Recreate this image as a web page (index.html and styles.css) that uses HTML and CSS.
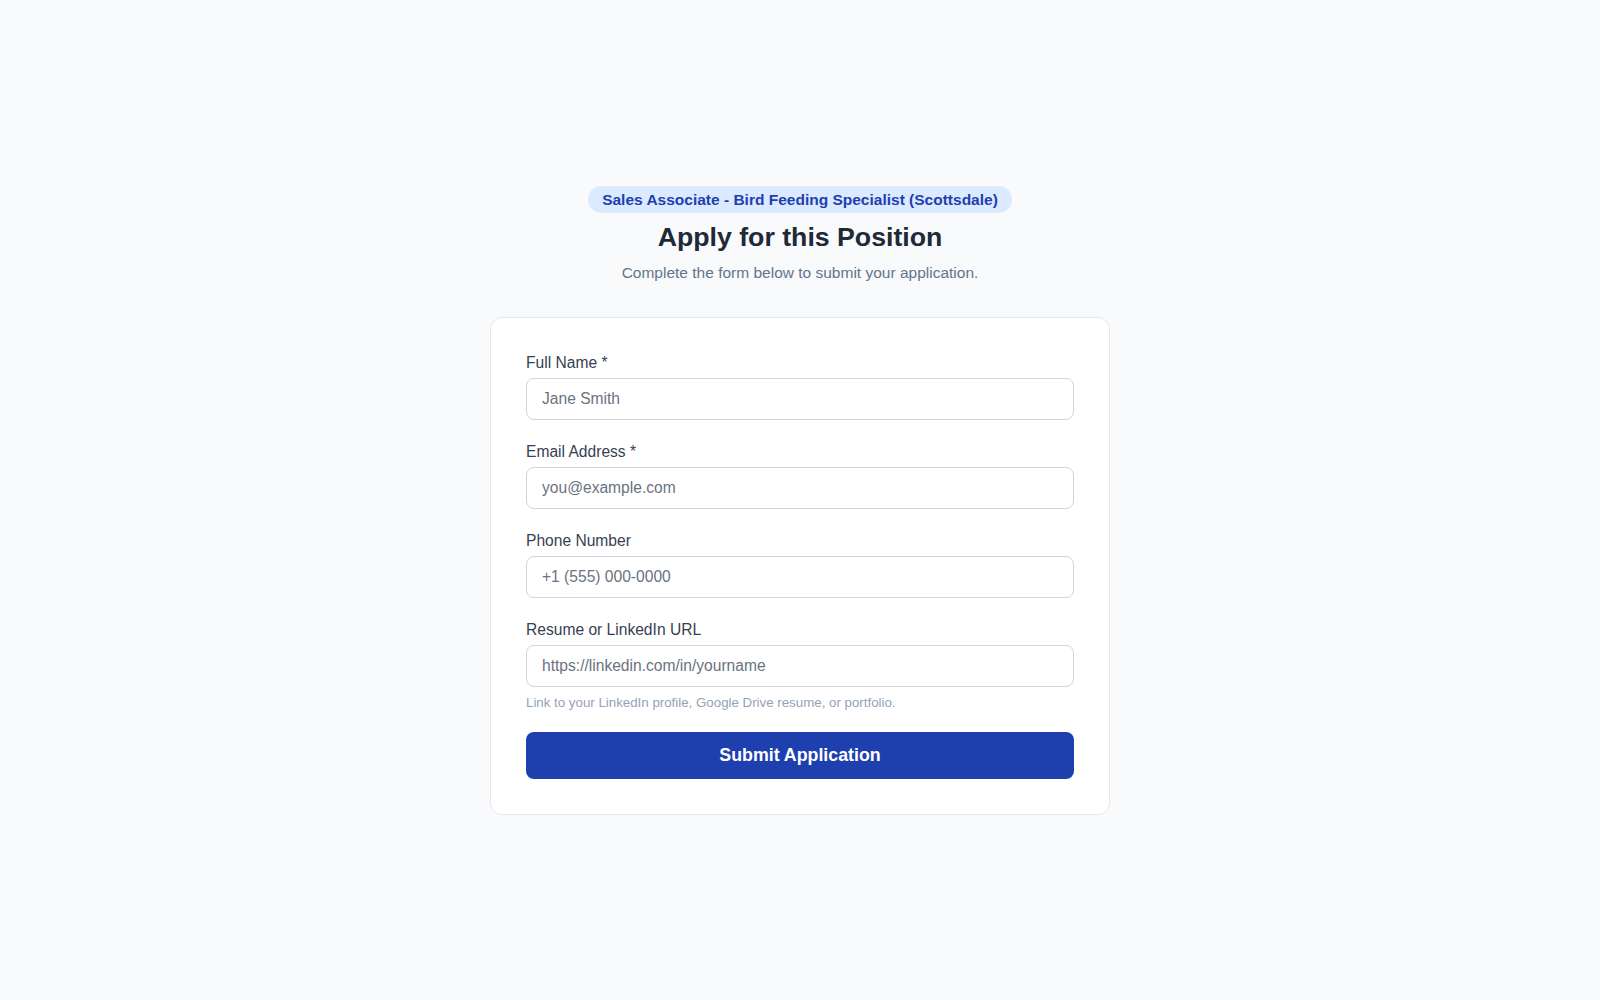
FILE: index.html
```html
<!DOCTYPE html>
<html lang="en">
<head>
<meta charset="utf-8">
<title>Apply for this Position</title>
<link rel="stylesheet" href="styles.css">
</head>
<body>
<main class="page">
  <header class="intro">
    <span class="badge">Sales Associate - Bird Feeding Specialist (Scottsdale)</span>
    <h1 class="title">Apply for this Position</h1>
    <p class="subtitle">Complete the form below to submit your application.</p>
  </header>
  <form class="card">
    <div class="field">
      <label class="label" for="name">Full Name *</label>
      <input class="input" id="name" type="text" placeholder="Jane Smith">
    </div>
    <div class="field">
      <label class="label" for="email">Email Address *</label>
      <input class="input" id="email" type="email" placeholder="you@example.com">
    </div>
    <div class="field">
      <label class="label" for="phone">Phone Number</label>
      <input class="input" id="phone" type="tel" placeholder="+1 (555) 000-0000">
    </div>
    <div class="field field-last">
      <label class="label" for="url">Resume or LinkedIn URL</label>
      <input class="input" id="url" type="url" placeholder="https://linkedin.com/in/yourname">
      <p class="hint">Link to your LinkedIn profile, Google Drive resume, or portfolio.</p>
    </div>
    <button class="submit" type="button">Submit Application</button>
  </form>
</main>
</body>
</html>
```

FILE: styles.css
```css
* { box-sizing: border-box; }
html, body { margin: 0; padding: 0; }
body {
  background: #f8fafc;
  font-family: "Liberation Sans", Arial, sans-serif;
  color: #1f2937;
}
.page {
  min-height: 1000px;
  display: flex;
  flex-direction: column;
  align-items: center;
  justify-content: center;
}
.intro {
  display: flex;
  flex-direction: column;
  align-items: center;
  text-align: center;
}
.badge {
  display: inline-block;
  background: #dbeafe;
  color: #1e40af;
  font-weight: 700;
  font-size: 15.5px;
  line-height: 27px;
  height: 27px;
  padding: 0 14px;
  border-radius: 14px;
}
.title {
  margin: 7px 0 0;
  font-size: 26.7px;
  line-height: 34px;
  font-weight: 700;
  color: #1f2937;
}
.subtitle {
  margin: 7px 0 0;
  font-size: 15.5px;
  line-height: 24px;
  color: #64748b;
}
.card {
  margin-top: 32px;
  width: 620px;
  background: #ffffff;
  border: 1px solid #e5e7eb;
  border-radius: 12px;
  padding: 35px;
}
.field { margin-bottom: 22px; }
.field-last { margin-bottom: 20px; }
.label {
  display: block;
  font-size: 15.6px;
  line-height: 20px;
  color: #374151;
  margin-bottom: 5px;
}
.input {
  display: block;
  width: 100%;
  height: 42px;
  padding: 0 15px;
  border: 1px solid #d1d5db;
  border-radius: 8px;
  font-family: inherit;
  font-size: 15.6px;
  color: #1f2937;
  background: #fff;
}
.input::placeholder { color: #6b7280; }
.hint {
  margin: 7px 0 0;
  font-size: 13.3px;
  line-height: 18px;
  color: #94a3b8;
}
.submit {
  display: block;
  width: 100%;
  height: 47px;
  border: 0;
  border-radius: 8px;
  background: #1e40af;
  color: #fff;
  font-family: inherit;
  font-size: 17.8px;
  font-weight: 700;
  cursor: pointer;
}
```
